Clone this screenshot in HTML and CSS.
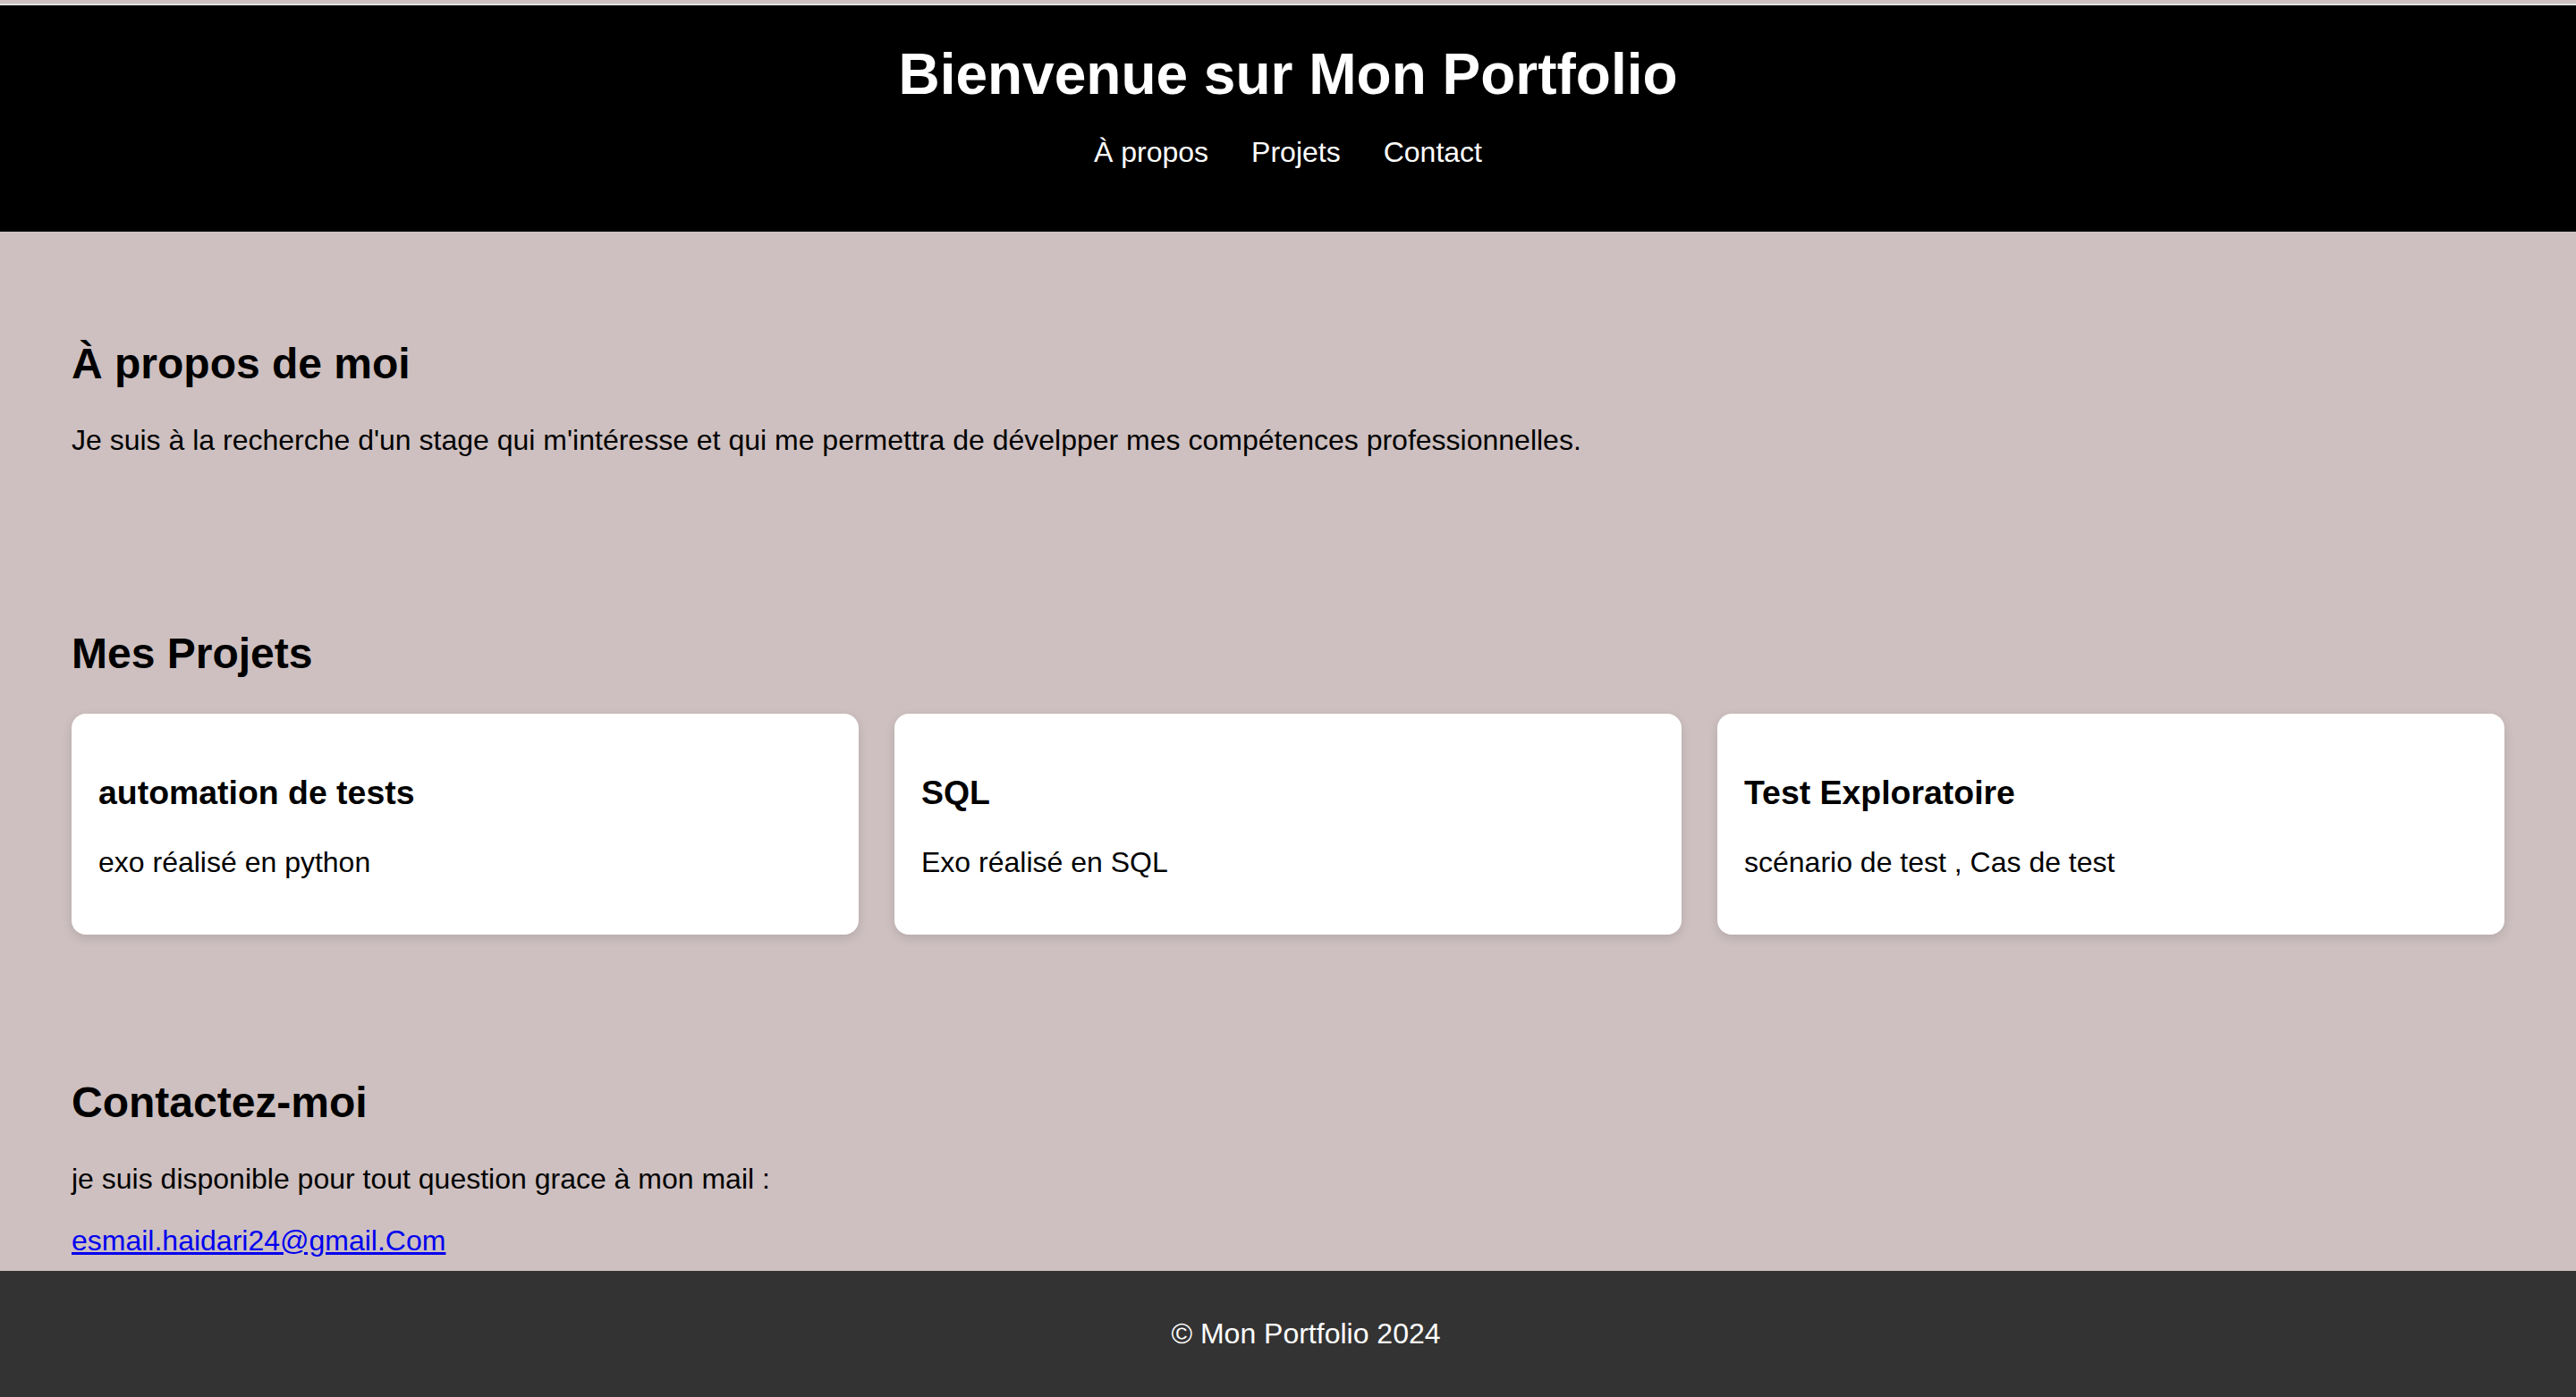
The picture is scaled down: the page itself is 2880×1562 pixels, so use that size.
FILE: index.html
```html
<!DOCTYPE html>
<html lang="fr">
<head>
  <meta charset="UTF-8" />
  <meta name="viewport" content="width=device-width, initial-scale=1.0"/>
  <title>Mon Portfolio</title>
  <link rel="stylesheet" href="styles.css">
</head>
<body>
  <header class="site-header">
    <h1>Bienvenue sur Mon Portfolio</h1>
    <nav>
      <ul class="nav-list">
        <li><a href="#about">À propos</a></li>
        <li><a href="#projects">Projets</a></li>
        <li><a href="#contact">Contact</a></li>
      </ul>
    </nav>
  </header>

  <section id="about" class="section">
    <h2>À propos de moi</h2>
    <p>Je suis à la recherche d'un stage qui m'intéresse et qui me permettra de dévelpper mes compétences professionnelles.</p>
  </section>

  <section id="projects" class="section">
    <h2>Mes Projets</h2>
    <div class="project-grid">
      <div class="project">
        <h3>automation de tests</h3>
        <p>exo réalisé en python</p>
      </div>
      <div class="project">
        <h3>SQL</h3>
        <p>Exo réalisé en SQL</p>
      </div>
      <div class="project">
        <h3>Test Exploratoire</h3>
        <p>scénario de test , Cas de test</p>
      </div>
    </div>
  </section>

  <section id="contact" class="section">
    <h2>Contactez-moi</h2>
    <p>je suis disponible pour tout question grace à mon mail :</p>
    <p><a href="mailto:esmail.haidari24@gmail.Com">esmail.haidari24@gmail.Com</a></p>
  </section>

  <footer class="site-footer">
    <p>&copy; Mon Portfolio 2024</p>
  </footer>
</body>
</html>
```

FILE: styles.css
```css
html {
  background: #fff;
}
body {
  margin: 0;
  font-family: "Liberation Sans", Arial, sans-serif;
  font-size: 32px;
  background: #cec0c0;
  color: #000;
}
.site-header {
  margin-top: 4px;
  border-top: 2px solid #e2e2e2;
  background: #000;
  color: #fff;
  padding: 40px 40px 38px;
  text-align: center;
}
.site-header h1 {
  margin: 0;
  font-size: 64px;
}
.nav-list {
  list-style: none;
  margin: 32px 0;
  padding: 0;
  display: flex;
  justify-content: center;
  gap: 48px;
}
.nav-list a {
  color: #fff;
  text-decoration: none;
}
.section {
  margin: 40px;
  padding: 40px;
}
.section h2 {
  font-size: 48px;
  margin: 40px 0;
}
.section p {
  margin: 32px 0;
}
.section a {
  color: #0000ee;
}
.project-grid {
  display: grid;
  grid-template-columns: repeat(3, 1fr);
  gap: 40px;
}
.project {
  background: #fff;
  padding: 30px;
  border-radius: 16px;
  box-shadow: 0 4px 12px rgba(0, 0, 0, 0.12);
}
.project h3 {
  font-size: 1.17em;
  margin: 1em 0;
}
.site-footer {
  position: fixed;
  left: 0;
  bottom: 0;
  box-sizing: border-box;
  width: 100%;
  padding: 20px 0 20px 40px;
  background: #333;
  color: #fff;
  text-align: center;
}
.site-footer p {
  margin: 32px 0;
}
```
